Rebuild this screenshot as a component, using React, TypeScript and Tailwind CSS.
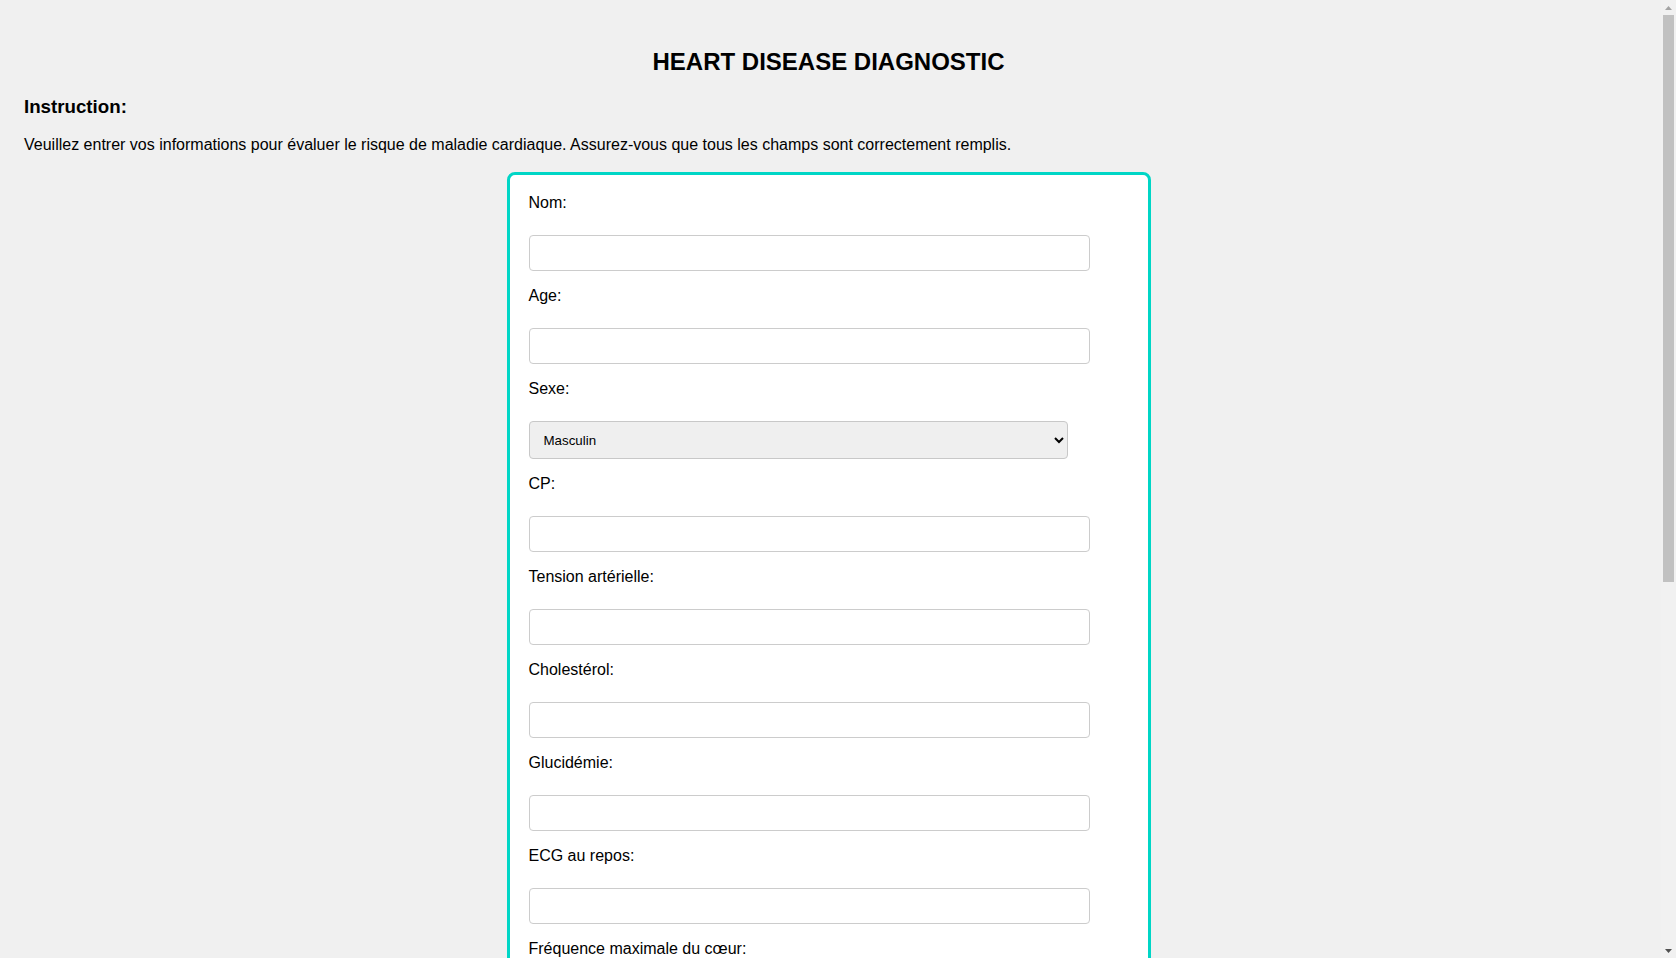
import React from "react";

const fieldsBefore = ["Nom:", "Age:"];
const fieldsAfter = [
  "CP:",
  "Tension artérielle:",
  "Cholestérol:",
  "Glucidémie:",
  "ECG au repos:",
  "Fréquence maximale du cœur:",
  "Angine d'effort:",
  "Oldpeak:",
  "Pente ST:",
];

function Field({ label }: { label: string }) {
  return (
    <div className="flex flex-col">
      <label className="block text-[16px] leading-[18px] text-black">{label}</label>
      <input
        type="text"
        className="mt-[23px] mb-[16px] h-[36px] w-[561px] rounded-[4px] border border-[#cccccc] bg-white px-[10px] text-[16px] outline-none"
      />
    </div>
  );
}

function Scrollbar() {
  return (
    <div className="flex h-full w-[15px] shrink-0 flex-col items-center bg-[#f1f1f1]">
      <div className="flex h-[15px] w-full items-center justify-center">
        <svg width="7" height="4" viewBox="0 0 7 4">
          <polygon points="3.5,0 7,4 0,4" fill="#a3a3a3" />
        </svg>
      </div>
      <div className="flex-1 w-full px-[2px]">
        <div className="h-[567px] w-full bg-[#c1c1c1]" />
      </div>
      <div className="flex h-[15px] w-full items-center justify-center">
        <svg width="7" height="4" viewBox="0 0 7 4">
          <polygon points="0,0 7,0 3.5,4" fill="#505050" />
        </svg>
      </div>
    </div>
  );
}

export default function App() {
  return (
    <div
      className="flex h-screen w-full overflow-hidden bg-[#f0f0f0] text-black"
      style={{ fontFamily: '"Liberation Sans", Arial, sans-serif' }}
    >
      <div className="min-w-0 flex-1 overflow-hidden pl-6 pr-[28px] pt-[48px] pb-[60px]">
        <h1 className="text-center text-[24px] font-bold leading-[28px]">HEART DISEASE DIAGNOSTIC</h1>
        <h3 className="mt-[20px] text-[18.72px] font-bold leading-[22px]">Instruction:</h3>
        <p className="mt-[18px] text-[16px] leading-[18px]">
          Veuillez entrer vos informations pour évaluer le risque de maladie cardiaque. Assurez-vous que tous les champs sont correctement remplis.
        </p>
        <form
          className="mx-auto mt-[18px] w-[644px] rounded-[8px] border-[3px] border-[#00d6c6] bg-white px-[19px] pt-[19px] pb-[20px]"
          onSubmit={(e) => e.preventDefault()}
        >
          {fieldsBefore.map((f) => (
            <Field key={f} label={f} />
          ))}
          <div className="flex flex-col">
            <label className="block text-[16px] leading-[18px]">Sexe:</label>
            <select className="mt-[23px] mb-[16px] h-[38px] w-[539px] rounded-[4px] border border-[#c8c8c8] bg-[#efefef] px-[10px] text-[13.33px] text-black">
              <option>Masculin</option>
              <option>Féminin</option>
            </select>
          </div>
          {fieldsAfter.map((f) => (
            <Field key={f} label={f} />
          ))}
          <button
            type="submit"
            className="mt-[10px] rounded-[4px] bg-[#00d6c6] px-[20px] py-[10px] text-[16px] text-white"
          >
            Diagnostiquer
          </button>
        </form>
      </div>
      <Scrollbar />
    </div>
  );
}
